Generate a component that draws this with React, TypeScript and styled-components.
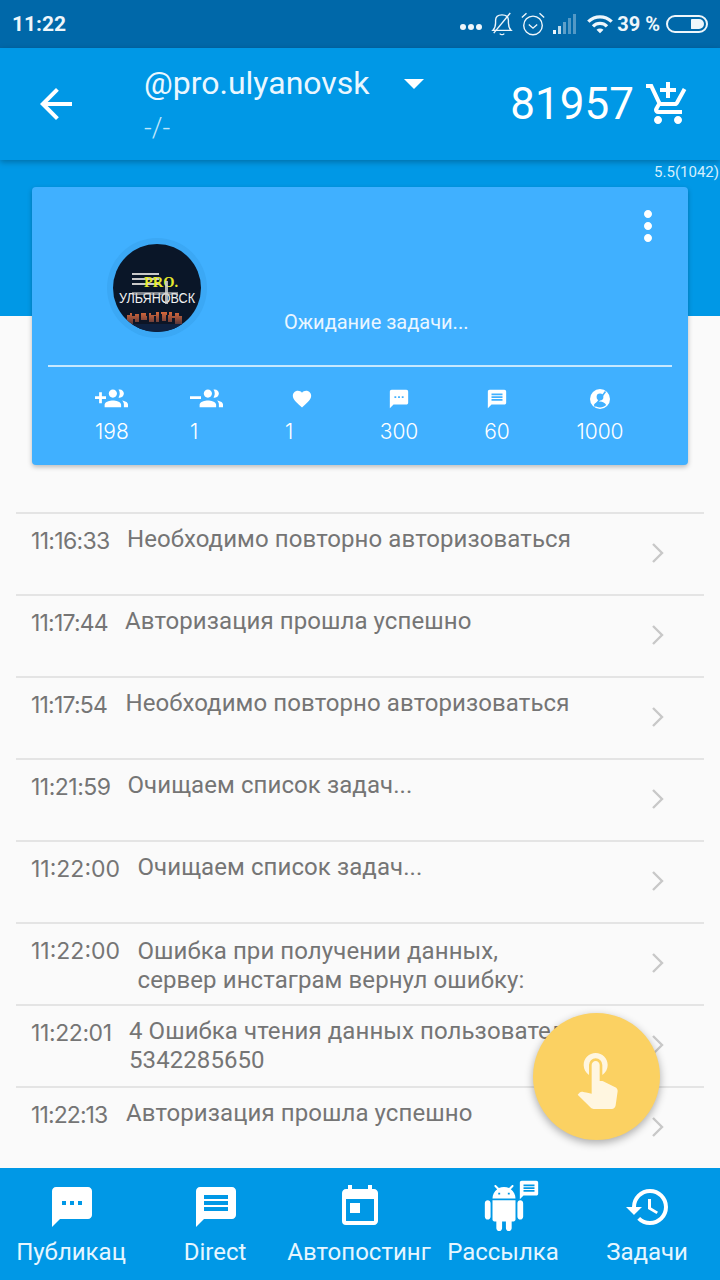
import styled, { createGlobalStyle } from 'styled-components'
import {
  MdAddShoppingCart,
  MdArrowBack,
  MdArrowDropDown,
  MdFavorite,
  MdHistory,
  MdMessage,
  MdMoreVert,
  MdSms,
  MdToday,
  MdTouchApp,
  MdWifi,
} from 'react-icons/md'
import type { ReactNode } from 'react'

const BLUE = '#0098e6'

const GlobalStyle = createGlobalStyle`
  html, body {
    margin: 0;
    padding: 0;
    background: #fafafa;
  }
  * {
    box-sizing: border-box;
  }
`

const Screen = styled.div`
  position: relative;
  width: 720px;
  height: 1280px;
  display: flex;
  flex-direction: column;
  overflow: hidden;
  font-family: Roboto, 'Noto Sans', sans-serif;
`

const StatusBar = styled.div`
  height: 48px;
  flex: 0 0 auto;
  background: #0068a9;
  color: #eef6fb;
  display: flex;
  align-items: center;
  padding: 0 12px;
`

const Clock = styled.span`
  font-size: 21px;
  font-weight: 700;
  margin-right: auto;
`

const StatusDots = styled.span`
  display: flex;
  gap: 2px;
  margin: 6px 9px 0 0;
  i {
    width: 6px;
    height: 6px;
    border-radius: 50%;
    background: #eef6fb;
  }
`

const StatusIcon = styled.svg`
  display: block;
  margin-right: 7px;
`

const BatteryText = styled.span`
  font-size: 20px;
  font-weight: 700;
  margin: 0 6px 0 3px;
  white-space: nowrap;
`

const Battery = styled.span`
  width: 42px;
  height: 18px;
  border: 2px solid #eef6fb;
  border-radius: 9px;
  display: flex;
  justify-content: flex-end;
  padding: 2px;
  i {
    width: 13px;
    background: #eef6fb;
    border-radius: 1px 6px 6px 1px;
  }
`

const Header = styled.header`
  position: relative;
  z-index: 1;
  height: 112px;
  flex: 0 0 auto;
  background: ${BLUE};
  box-shadow: 0 2px 6px rgba(0, 0, 0, 0.28);
  color: #fff;
  display: flex;
  align-items: center;
  padding: 0 28px 0 32px;
`

const BackButton = styled.span`
  display: flex;
  font-size: 48px;
  margin-right: 64px;
`

const Account = styled.div`
  display: flex;
  flex-direction: column;
  margin-top: -2px;
`

const AccountRow = styled.div`
  display: flex;
  align-items: center;
  height: 40px;
`

const AccountName = styled.span`
  font-size: 32px;
  color: #eaf7ff;
`

const Caret = styled.span`
  display: flex;
  font-size: 48px;
  margin-left: 20px;
`

const AccountSub = styled.span`
  font-size: 27px;
  font-weight: 300;
  color: #bfe6fb;
  margin-top: 9px;
  line-height: 32px;
`

const Balance = styled.span`
  margin-left: auto;
  font-size: 44px;
`

const CartIcon = styled.span`
  display: flex;
  font-size: 48px;
  margin-left: 10px;
`

const Body = styled.main`
  flex: 1 1 auto;
  min-height: 0;
  display: flex;
  flex-direction: column;
  background: linear-gradient(${BLUE} 156px, #fafafa 156px);
`

const Version = styled.div`
  height: 28px;
  font-size: 15px;
  line-height: 24px;
  color: #d5effd;
  text-align: right;
  padding-right: 1px;
`

const Card = styled.section`
  flex: 0 0 auto;
  margin: 0 32px;
  height: 278px;
  padding: 0 16px;
  background: #40b0ff;
  border-radius: 4px;
  box-shadow: 0 2px 5px rgba(0, 0, 0, 0.26);
  color: #fff;
`

const CardTop = styled.div`
  height: 180px;
  display: flex;
  align-items: flex-start;
  padding-left: 59px;
  border-bottom: 2px solid #c7e9ff;
`

const AvatarRing = styled.div`
  width: 100px;
  height: 100px;
  margin-top: 51px;
  padding: 6px;
  border-radius: 50%;
  background: #3ba8f5;
  display: flex;
  align-items: center;
  justify-content: center;
`

const StatusText = styled.span`
  margin: 123px 0 0 77px;
  font-size: 20px;
  line-height: 24px;
  color: #eaf6ff;
`

const MenuButton = styled.span`
  display: flex;
  margin: 15px 0 0 auto;
  font-size: 48px;
`

const Stats = styled.div`
  display: grid;
  grid-template-columns: 95px 95px 65px 98px 98px 108px;
  padding: 20px 0 0 47px;
`

const Stat = styled.div<{ $centered?: boolean }>`
  display: flex;
  flex-direction: column;
  align-items: ${({ $centered }) => ($centered ? 'center' : 'flex-start')};
`

const StatIcon = styled.span`
  width: 33px;
  height: 24px;
  display: flex;
  align-items: center;
  justify-content: center;
`

const StatValue = styled.span`
  margin-top: 8px;
  font-family: Inter, sans-serif;
  font-size: 21px;
  font-weight: 300;
  line-height: 26px;
`

const LogList = styled.div`
  margin-top: 47px;
  padding: 0 16px;
`

const LogRow = styled.div`
  position: relative;
  height: 82px;
  border-top: 2px solid #e4e4e4;
  padding: 11px 46px 0 15px;
  display: flex;
  align-items: flex-start;
  gap: 17px;
  color: #757575;
`

const LogTime = styled.span<{ $width: number; $tracking: number }>`
  flex: 0 0 auto;
  width: ${({ $width }) => $width}px;
  margin-top: 2px;
  font-family: Inter, sans-serif;
  font-size: 23px;
  letter-spacing: ${({ $tracking }) => $tracking}px;
  line-height: 29px;
  white-space: nowrap;
`

const LogMessage = styled.span<{ $drop?: number }>`
  flex: 0 1 auto;
  font-size: 24px;
  letter-spacing: 0.08px;
  line-height: 29px;
  white-space: nowrap;
  padding-top: ${({ $drop }) => $drop ?? 0}px;
`

const LogChevron = styled.svg`
  position: absolute;
  right: 39px;
  top: 28px;
  display: block;
`

const Fab = styled.button`
  position: absolute;
  left: 533px;
  top: 1013px;
  width: 127px;
  height: 127px;
  padding: 0;
  border: 0;
  border-radius: 50%;
  background: #fbd162;
  color: #fff6e0;
  box-shadow: 0 3px 8px rgba(0, 0, 0, 0.32);
  display: flex;
  align-items: center;
  justify-content: center;
  font-size: 64px;
`

const TabBar = styled.nav`
  position: relative;
  height: 112px;
  flex: 0 0 auto;
  background: ${BLUE};
  display: grid;
  grid-template-columns: repeat(5, 144px);
  color: #fff;
`

const Tab = styled.div`
  display: flex;
  flex-direction: column;
  align-items: center;
  padding-top: 15px;
  white-space: nowrap;
`

const TabIcon = styled.span`
  position: relative;
  height: 48px;
  display: flex;
  font-size: 48px;
`

const TabBadge = styled.span`
  position: absolute;
  right: -13px;
  top: -4px;
  display: flex;
  font-size: 22px;
`

const TabLabel = styled.span`
  margin: 6px 2px 0 0;
  font-size: 24px;
  line-height: 30px;
  color: #e6f6ff;
`

const AVATAR_CLIP = 'avatar-clip'

function AvatarLogo() {
  return (
    <svg width="88" height="88" viewBox="0 0 88 88">
      <defs>
        <clipPath id={AVATAR_CLIP}>
          <circle cx="44" cy="44" r="44" />
        </clipPath>
        <linearGradient id="avatar-sky" x1="0" y1="0" x2="0" y2="1">
          <stop offset="0" stopColor="#d9693a" />
          <stop offset="1" stopColor="#3a2a3a" />
        </linearGradient>
      </defs>
      <g clipPath={`url(#${AVATAR_CLIP})`}>
        <rect width="88" height="88" fill="#0a1628" />
        <path
          d="M14 82v-11h3v-2h2v3h3v-2h4v4h2v-5h5v3h3v-3h2v2h5v-3h3v4h2v-4h6v3h2v-3h3v4h3v-3h4v3h3v11z"
          fill="url(#avatar-sky)"
        />
        <path
          d="M20 82v-7h2v3h4v-7h2v5h6v-5h2v7h5v-6h2v6h3v-8h3v7h4v-6h2v7h4v-4h3v8z"
          fill="#0d1526"
        />
        <rect x="0" y="80" width="88" height="8" fill="#0e2140" />
        <rect x="19" y="29" width="27" height="2" fill="#c9c9c9" />
        <rect x="19" y="34" width="27" height="2" fill="#c9c9c9" />
        <rect x="19" y="39" width="27" height="2" fill="#c9c9c9" />
        <text
          x="31"
          y="43"
          fontFamily="'Liberation Serif', serif"
          fontWeight="700"
          fontSize="15"
          textLength="34"
          lengthAdjust="spacingAndGlyphs"
          fill="#e6ea2e"
        >
          PRO.
        </text>
        <text
          x="6"
          y="59"
          fontFamily="'Liberation Sans', sans-serif"
          fontSize="14"
          textLength="76"
          lengthAdjust="spacingAndGlyphs"
          fill="#f2f2f2"
        >
          УЛЬЯНОВСК
        </text>
        <rect x="52" y="37" width="3" height="23" fill="#cfcfcf" opacity="0.85" />
        <rect x="19" y="48" width="46" height="3" fill="#cfcfcf" opacity="0.6" />
      </g>
    </svg>
  )
}

function GlyphBellOff() {
  return (
    <StatusIcon width="22" height="28" viewBox="0 0 24 28" fill="none" stroke="#eef6fb" strokeWidth="1.5">
      <path d="M2 21h20c-2-2-3-4-3-8V10c0-4-3-6-7-6s-7 2-7 6v3c0 4-1 6-3 8z" />
      <path d="M9.500 24.500c1.500 1.500 3.500 1.500 5 0" />
      <path d="M21 2 3 24" />
    </StatusIcon>
  )
}

function GlyphAlarm() {
  return (
    <StatusIcon width="26" height="28" viewBox="0 0 28 28" fill="none" stroke="#eef6fb" strokeWidth="1.5">
      <circle cx="14" cy="15.500" r="10" />
      <path d="M9.500 14.500l4.500 4 4.500-4" />
      <path d="M2 7l5-4.500M26 7l-5-4.500" />
    </StatusIcon>
  )
}

function GlyphSignal() {
  return (
    <StatusIcon width="26" height="22" viewBox="0 0 26 22">
      <rect x="0" y="17" width="3" height="4" fill="#eef6fb" />
      <rect x="5" y="13" width="3" height="8" fill="#eef6fb" opacity="0.8" />
      <rect x="10" y="9" width="3" height="12" fill="#eef6fb" opacity="0.4" />
      <rect x="15" y="5" width="3" height="16" fill="#eef6fb" opacity="0.35" />
      <rect x="20" y="1" width="3" height="20" fill="#eef6fb" opacity="0.35" />
    </StatusIcon>
  )
}

const GROUP_PEOPLE =
  'M18 11c1.660 0 2.990-1.340 2.990-3S19.660 5 18 5c-.32 0-.63.05-.91.14.57.81.9 1.790.9 2.860s-.34 2.040-.9 2.860c.28.09.59.14.91.14zm-5 0c1.660 0 2.990-1.340 2.990-3S14.660 5 13 5s-3 1.340-3 3 1.340 3 3 3zm6.620 2.160c.83.73 1.380 1.660 1.380 2.840v2h3v-2c0-1.540-2.370-2.490-4.380-2.840zM13 13c-2 0-6 1-6 3v2h12v-2c0-2-4-3-6-3z'

function GroupGlyph({ sign }: { sign: string }) {
  return (
    <svg width="34" height="34" viewBox="0 0 24 24" fill="#fff">
      <path d={sign} />
      <path d={GROUP_PEOPLE} />
    </svg>
  )
}

function AndroidGlyph() {
  return (
    <svg width="46" height="46" viewBox="0 0 24 24" fill="#fff" style={{ marginTop: 2 }}>
      <path d="M6 18c0 .55.45 1 1 1h1v3.500c0 .83.67 1.500 1.500 1.500s1.500-.67 1.500-1.500V19h2v3.500c0 .83.67 1.500 1.500 1.500s1.500-.67 1.500-1.500V19h1c.55 0 1-.45 1-1V8H6v10zM3.500 8C2.670 8 2 8.670 2 9.500v7c0 .83.67 1.500 1.500 1.500S5 17.330 5 16.500v-7C5 8.670 4.330 8 3.500 8zm17 0c-.83 0-1.500.67-1.500 1.500v7c0 .83.67 1.500 1.500 1.500s1.500-.67 1.500-1.500v-7c0-.83-.67-1.500-1.500-1.500zm-4.970-5.840l1.300-1.300c.2-.2.2-.51 0-.71-.2-.2-.51-.2-.71 0l-1.480 1.480C13.850 1.230 12.950 1 12 1c-.96 0-1.860.23-2.660.63L7.850.15c-.2-.2-.51-.2-.71 0-.2.2-.2.51 0 .71l1.310 1.310C6.970 3.260 6 5.010 6 7h12c0-1.990-.97-3.750-2.470-4.840zM10 5H9V4h1v1zm5 0h-1V4h1v1z" />
    </svg>
  )
}

type StatItem = {
  icon: ReactNode
  value: string
  centered?: boolean
}

const stats: StatItem[] = [
  { icon: <GroupGlyph sign="M8 10H5V7H3v3H0v2h3v3h2v-3h3v-2z" />, value: '198' },
  { icon: <GroupGlyph sign="M8 10H0v2h8z" />, value: '1' },
  { icon: <MdFavorite size={22} />, value: '1' },
  { icon: <MdSms size={22} />, value: '300', centered: true },
  { icon: <MdMessage size={22} />, value: '60', centered: true },
  {
    icon: (
      <svg width="24" height="24" viewBox="0 0 24 24">
        <circle cx="12" cy="12" r="10" fill="#fff" />
        <circle cx="12" cy="10" r="3.400" fill="#40b0ff" />
        <path d="M5.800 18c1.200-2.400 3.600-3.600 6.200-3.600s5 1.200 6.200 3.600c-1.600 1.600-3.800 2.400-6.200 2.400s-4.600-.8-6.200-2.400z" fill="#40b0ff" />
        <path d="M17.500 4.500 6.500 19.500" stroke="#40b0ff" strokeWidth="1.500" />
      </svg>
    ),
    value: '1000',
    centered: true,
  },
]

type LogItem = {
  time: string
  width: number
  tracking: number
  lines: string[]
  drop?: number
}

const logItems: LogItem[] = [
  { time: '11:16:33', width: 79, tracking: -0.7, lines: ['Необходимо повторно авторизоваться'] },
  { time: '11:17:44', width: 77, tracking: -0.8, lines: ['Авторизация прошла успешно'] },
  { time: '11:17:54', width: 77.5, tracking: -0.8, lines: ['Необходимо повторно авторизоваться'] },
  { time: '11:21:59', width: 79.5, tracking: -0.5, lines: ['Очищаем список задач...'] },
  { time: '11:22:00', width: 89.5, tracking: 0, lines: ['Очищаем список задач...'] },
  {
    time: '11:22:00',
    width: 89.5,
    tracking: 0,
    lines: ['Ошибка при получении данных,', 'сервер инстаграм вернул ошибку:'],
    drop: 2,
  },
  { time: '11:22:01', width: 81, tracking: -0.4, lines: ['4 Ошибка чтения данных пользователя', '5342285650'] },
  { time: '11:22:13', width: 78, tracking: -0.9, lines: ['Авторизация прошла успешно'] },
]

type TabItem = {
  label: string
  icon: ReactNode
  badge?: ReactNode
}

const tabs: TabItem[] = [
  { label: 'Публикац', icon: <MdSms /> },
  { label: 'Direct', icon: <MdMessage /> },
  { label: 'Автопостинг', icon: <MdToday /> },
  { label: 'Рассылка', icon: <AndroidGlyph />, badge: <MdMessage /> },
  { label: 'Задачи', icon: <MdHistory /> },
]

export default function App() {
  return (
    <>
      <GlobalStyle />
      <Screen>
        <StatusBar>
          <Clock>11:22</Clock>
          <StatusDots>
            <i />
            <i />
            <i />
          </StatusDots>
          <GlyphBellOff />
          <GlyphAlarm />
          <GlyphSignal />
          <MdWifi size={28} />
          <BatteryText>39 %</BatteryText>
          <Battery>
            <i />
          </Battery>
        </StatusBar>
        <Header>
          <BackButton>
            <MdArrowBack />
          </BackButton>
          <Account>
            <AccountRow>
              <AccountName>@pro.ulyanovsk</AccountName>
              <Caret>
                <MdArrowDropDown />
              </Caret>
            </AccountRow>
            <AccountSub>-/-</AccountSub>
          </Account>
          <Balance>81957</Balance>
          <CartIcon>
            <MdAddShoppingCart />
          </CartIcon>
        </Header>
        <Body>
          <Version>5.5(1042)</Version>
          <Card>
            <CardTop>
              <AvatarRing>
                <AvatarLogo />
              </AvatarRing>
              <StatusText>Ожидание задачи...</StatusText>
              <MenuButton>
                <MdMoreVert />
              </MenuButton>
            </CardTop>
            <Stats>
              {stats.map((stat, index) => (
                <Stat key={`stat-${index}`} $centered={stat.centered}>
                  <StatIcon>{stat.icon}</StatIcon>
                  <StatValue>{stat.value}</StatValue>
                </Stat>
              ))}
            </Stats>
          </Card>
          <LogList>
            {logItems.map((item, index) => (
              <LogRow key={`log-${index}`}>
                <LogTime $width={item.width} $tracking={item.tracking}>
                  {item.time}
                </LogTime>
                <LogMessage $drop={item.drop}>
                  {item.lines.map((line) => (
                    <div key={line}>{line}</div>
                  ))}
                </LogMessage>
                <LogChevron width="14" height="22" viewBox="0 0 14 22" fill="none" stroke="#c8c8c8" strokeWidth="2.400">
                  <path d="M2 2l9 9-9 9" />
                </LogChevron>
              </LogRow>
            ))}
          </LogList>
        </Body>
        <TabBar>
          {tabs.map((tab) => (
            <Tab key={tab.label}>
              <TabIcon>
                {tab.icon}
                {tab.badge ? <TabBadge>{tab.badge}</TabBadge> : null}
              </TabIcon>
              <TabLabel>{tab.label}</TabLabel>
            </Tab>
          ))}
        </TabBar>
        <Fab type="button" aria-label="Действие">
          <MdTouchApp />
        </Fab>
      </Screen>
    </>
  )
}
